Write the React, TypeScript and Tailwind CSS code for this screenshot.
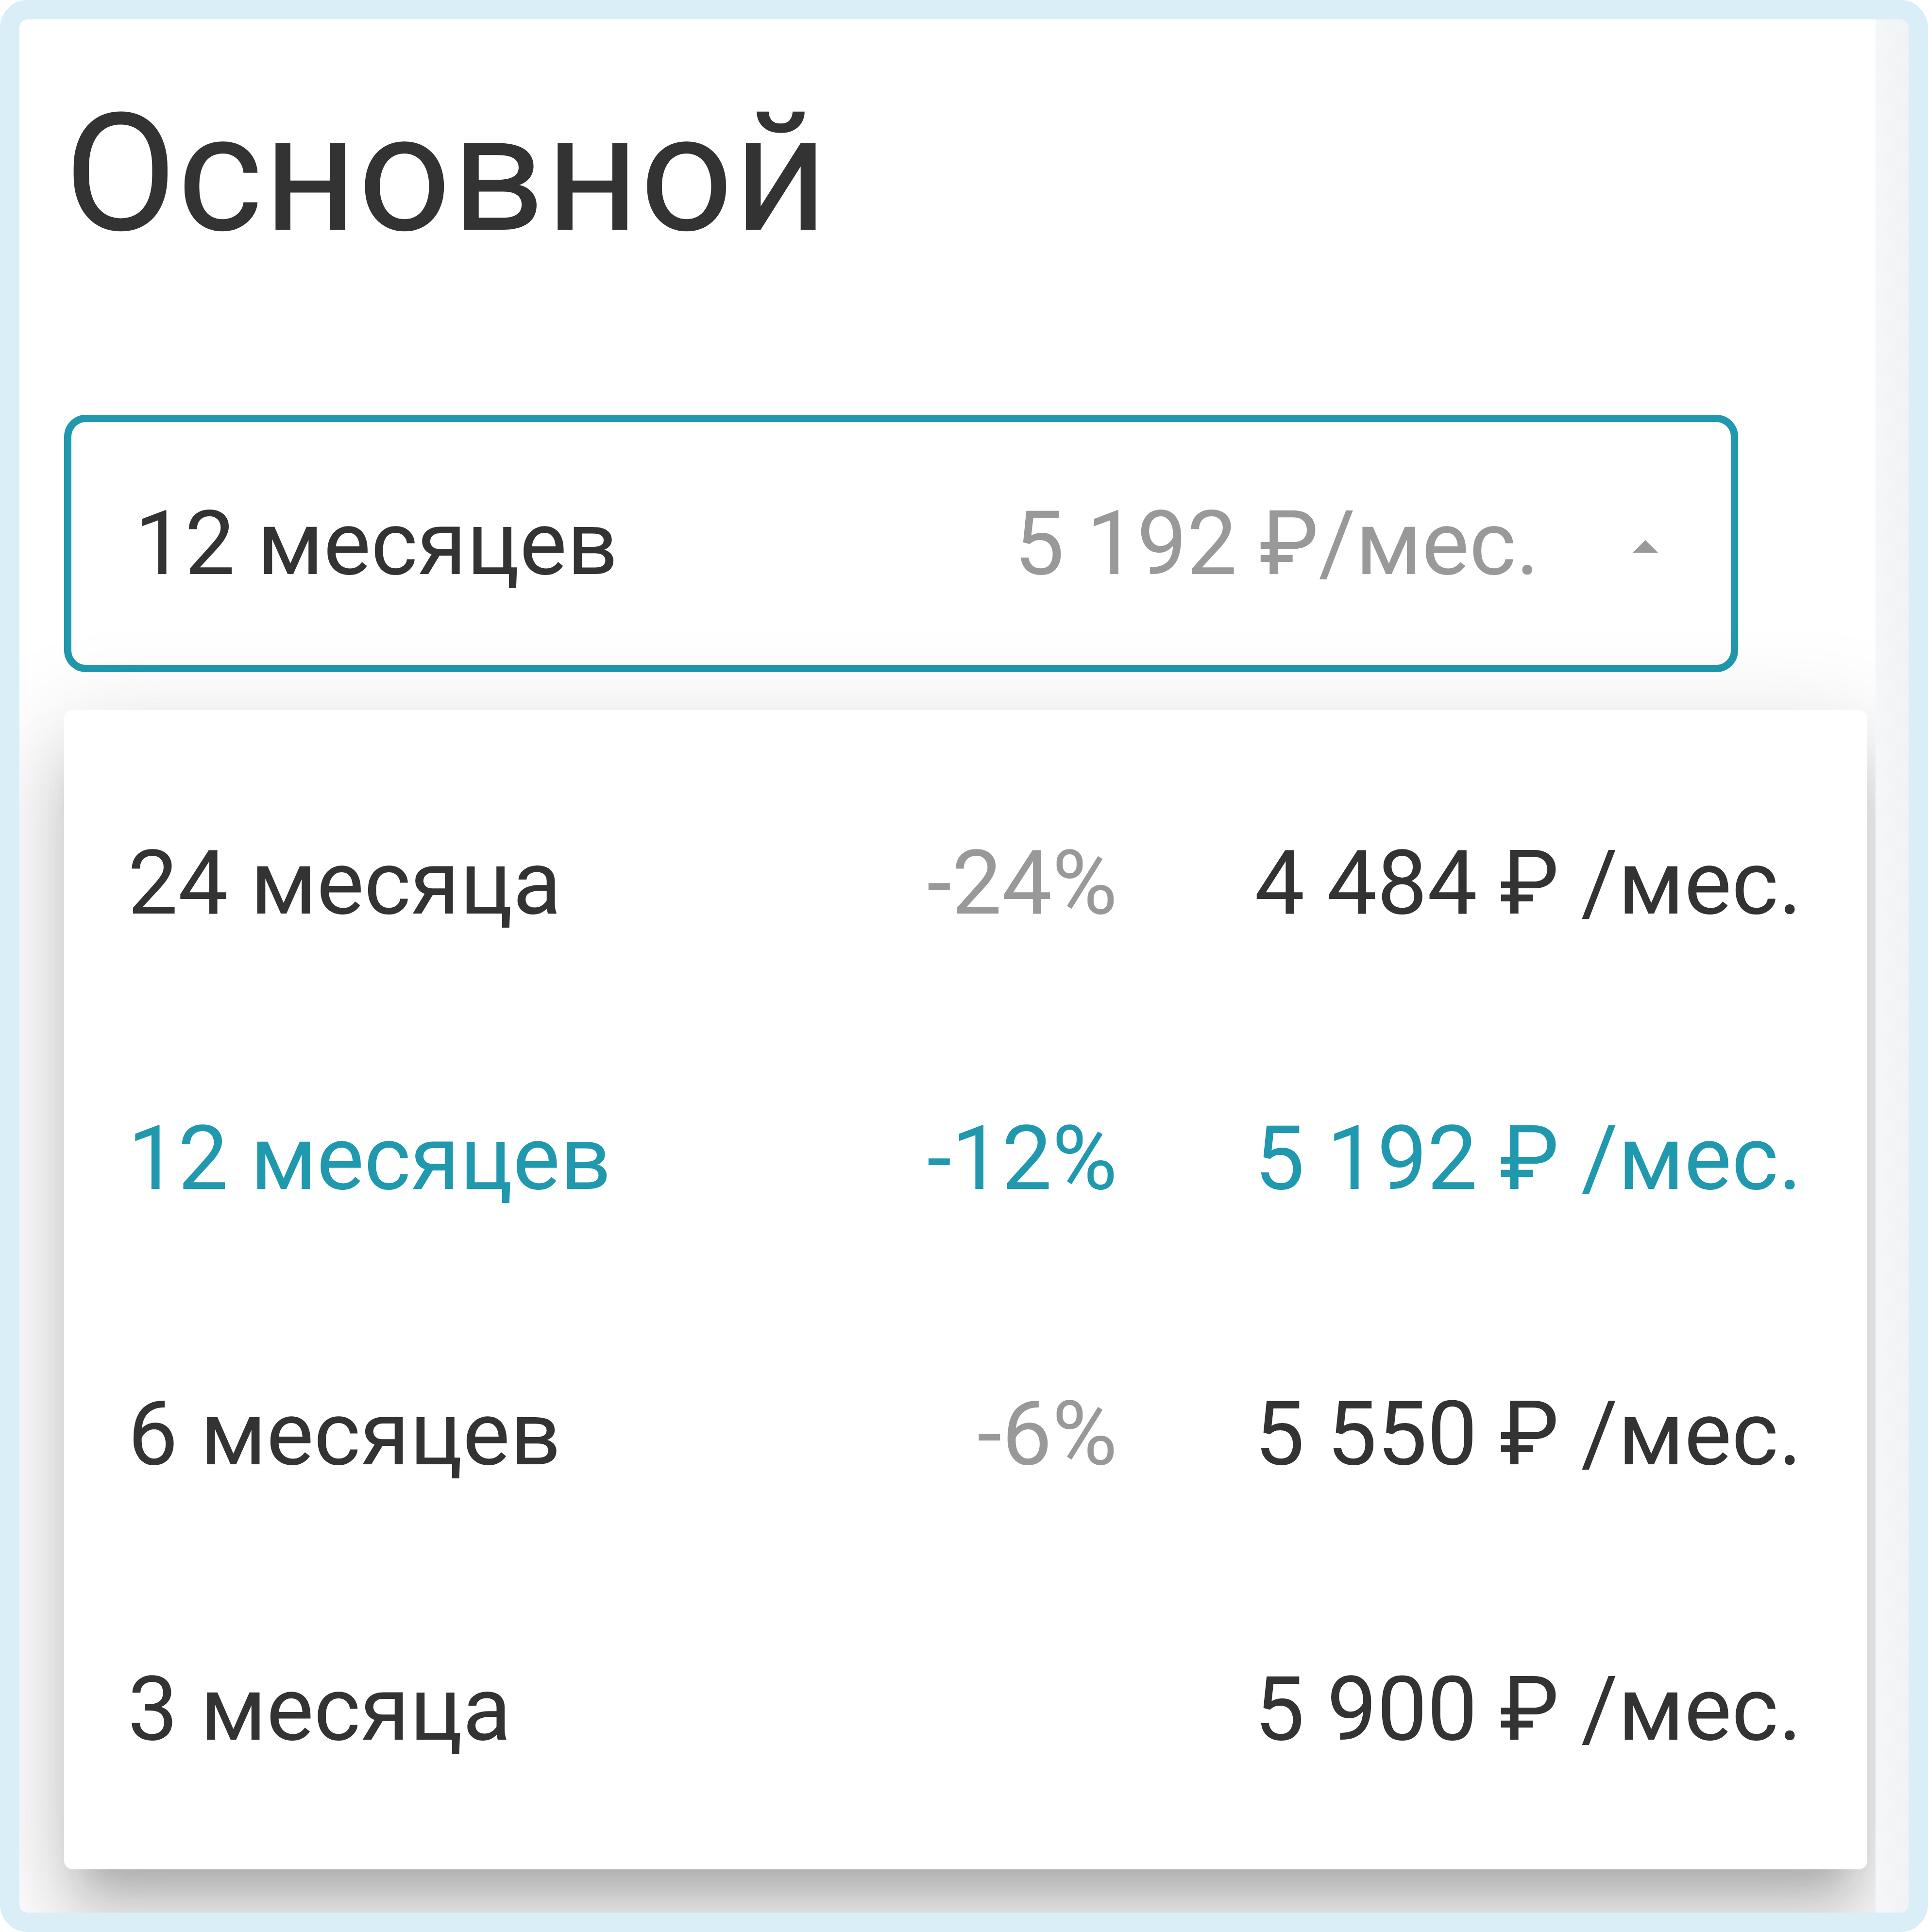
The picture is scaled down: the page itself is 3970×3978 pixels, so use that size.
import React from 'react';

type Plan = { label: string; discount?: string; price: string; selected?: boolean };

const plans: Plan[] = [
  { label: '24 месяца', discount: '-24%', price: '4 484 ₽ /мес.' },
  { label: '12 месяцев', discount: '-12%', price: '5 192 ₽ /мес.', selected: true },
  { label: '6 месяцев', discount: '-6%', price: '5 550 ₽ /мес.' },
  { label: '3 месяца', price: '5 900 ₽ /мес.' },
];

const App: React.FC = () => {
  return (
    <div className="w-[3970px] h-[3978px] bg-white font-['Roboto','Liberation_Sans',sans-serif]">
      <div className="w-full h-full bg-[#d9eef6] rounded-[57px] p-[40px]">
        <div className="flex h-full bg-white rounded-[17px] overflow-hidden">
          <div className="flex-1 flex flex-col pl-[92px] pr-[16px] pt-[149px]">
            <h1 className="text-[338px] leading-none font-normal text-[#333]">Основной</h1>

            {/* select */}
            <div className="mt-[327px] w-[3447px] h-[530px] flex items-center border-[15px] border-[#2098ae] rounded-[45px] pl-[130px] pr-[150px]">
              <span className="flex-1 text-[184px] leading-none text-[#333] whitespace-nowrap">12 месяцев</span>
              <span className="text-[184px] leading-none text-[#999] whitespace-nowrap">5 192 ₽/мес.</span>
              <svg viewBox="0 0 10 5" className="w-[52px] h-[26px] ml-[192px] mt-[12px]" fill="#999">
                <path d="M0 5 L5 0 L10 5 Z" />
              </svg>
            </div>

            {/* menu */}
            <div className="mt-[78px] w-[3713px] bg-white rounded-[18px] pt-[72px] pb-[47px] shadow-[0_75px_75px_-45px_rgba(0,0,0,0.18),0_120px_150px_15px_rgba(0,0,0,0.12),0_45px_210px_30px_rgba(0,0,0,0.1)]">
              {plans.map((p) => (
                <div
                  key={p.label}
                  className={`flex items-center h-[567px] pl-[131px] text-[184px] leading-none whitespace-nowrap ${p.selected ? 'text-[#2098ae]' : 'text-[#333]'}`}
                >
                  <span className="flex-1">{p.label}</span>
                  <span className={`text-right ${p.selected ? '' : 'text-[#999]'}`}>{p.discount}</span>
                  <span className="w-[1544px] pl-[282px]">{p.price}</span>
                </div>
              ))}
            </div>
          </div>
          <div className="w-[68px] h-full bg-gradient-to-r from-[#f5f7f8] to-[#f1f2f3]" />
        </div>
      </div>
    </div>
  );
};

export default App;
